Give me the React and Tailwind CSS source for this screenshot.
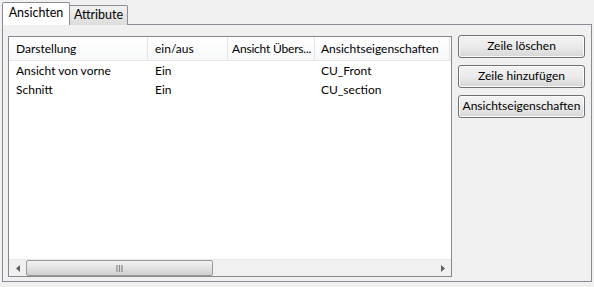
import React from 'react';

const columns = [
  { label: 'Darstellung', w: 'w-[139px]', pl: 'pl-[7px]' },
  { label: 'ein/aus', w: 'w-[80px]', pl: 'pl-[7px]' },
  { label: 'Ansicht Übers...', w: 'w-[87px]', pl: 'pl-[4px] tracking-[-0.2px]' },
  { label: 'Ansichtseigenschaften', w: 'w-[135px]', pl: 'pl-[6px]' },
];

const rows = [
  ['Ansicht von vorne', 'Ein', '', 'CU_Front'],
  ['Schnitt', 'Ein', '', 'CU_section'],
];

const Button = ({ children }) => (
  <button className="h-[23px] w-[127px] rounded-[3px] border border-[#707070] bg-gradient-to-b from-[#f2f2f2] via-[#ebebeb] to-[#d6d6d6] text-[12px] text-black shadow-[inset_0_0_0_1px_#fcfcfc] pb-[1px]">
    {children}
  </button>
);

export default function App() {
  return (
    <div
      className="w-[594px] h-[287px] bg-[#f0f0f0] pt-[2px] px-[2px] text-[12px] text-black"
      style={{ fontFamily: 'Lato, "Noto Sans", sans-serif' }}
    >
      <div className="flex items-end h-[23px]">
        <div className="relative z-10 h-[23px] w-[68px] border border-b-0 border-[#898c95] bg-white flex items-center justify-center rounded-t-[2px] leading-none pb-[1px] text-[12.5px]">
          Ansichten
        </div>
        <div className="h-[20px] w-[58px] border border-l-0 border-b-0 border-[#898c95] bg-gradient-to-b from-[#f2f2f2] to-[#dcdcdc] flex items-center justify-center leading-none rounded-tr-[2px] text-[12.5px]">
          Attribute
        </div>
      </div>
      <div className="-mt-[1px] h-[258px] w-[590px] border border-[#898c95] bg-[#f0f0f0] flex gap-[6px] pl-[5px] pt-[11px]">
        <div className="h-[241px] w-[444px] border border-[#828790] bg-white flex flex-col">
          <div className="flex h-[24px] border-b border-[#e5e5e5] bg-gradient-to-b from-white to-[#f7f8f9]">
            {columns.map((c) => (
              <div key={c.label} className={`${c.w} ${c.pl} h-full flex items-center border-r border-[#e3e4e6] whitespace-nowrap overflow-hidden`}>
                {c.label}
              </div>
            ))}
          </div>
          <div className="flex-1">
            {rows.map((r) => (
              <div key={r[0]} className="flex h-[19px] items-center">
                {r.map((cell, i) => (
                  <div key={i} className={`${columns[i].w} ${columns[i].pl} whitespace-nowrap`}>
                    {cell}
                  </div>
                ))}
              </div>
            ))}
          </div>
          <div className="h-[17px] flex bg-[#f0f0f0] border-t border-[#e8e8e8]">
            <div className="w-[17px] flex items-center justify-center">
              <svg width="4" height="7" viewBox="0 0 4 7"><path d="M4 0 L0 3.5 L4 7 Z" fill="#606060" /></svg>
            </div>
            <div className="w-[187px] h-[16px] rounded-[2px] border border-[#999] bg-gradient-to-b from-[#f3f3f3] via-[#e2e2e2] to-[#cfcfcf] flex items-center justify-center">
              <svg width="8" height="7" viewBox="0 0 8 7">
                <path d="M1 0 V7 M3.5 0 V7 M6 0 V7" stroke="#8a8a8a" strokeWidth="1.2" />
              </svg>
            </div>
            <div className="flex-1 flex items-center justify-end pr-[6px]">
              <svg width="4" height="7" viewBox="0 0 4 7"><path d="M0 0 L4 3.5 L0 7 Z" fill="#606060" /></svg>
            </div>
          </div>
        </div>
        <div className="flex flex-col gap-[7px] -mt-[1px]">
          <Button>Zeile löschen</Button>
          <Button>Zeile hinzufügen</Button>
          <Button>Ansichtseigenschaften</Button>
        </div>
      </div>
    </div>
  );
}
